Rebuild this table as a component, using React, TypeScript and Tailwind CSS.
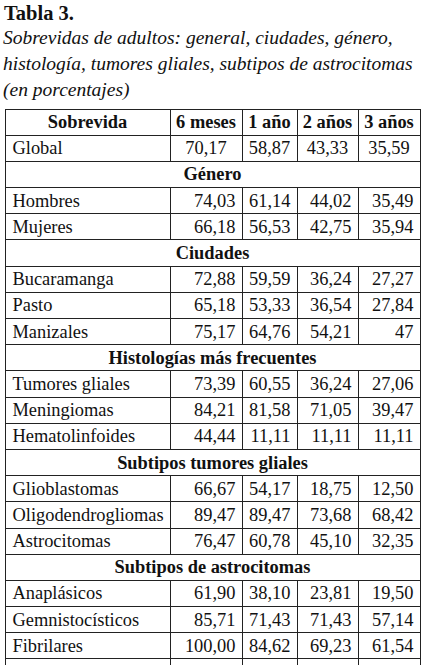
import React from "react";

type Row =
  | { kind: "section"; label: string }
  | { kind: "data"; label: string; values: string[]; center?: boolean };

const rows: Row[] = [
  { kind: "data", label: "Global", values: ["70,17", "58,87", "43,33", "35,59"], center: true },
  { kind: "section", label: "Género" },
  { kind: "data", label: "Hombres", values: ["74,03", "61,14", "44,02", "35,49"] },
  { kind: "data", label: "Mujeres", values: ["66,18", "56,53", "42,75", "35,94"] },
  { kind: "section", label: "Ciudades" },
  { kind: "data", label: "Bucaramanga", values: ["72,88", "59,59", "36,24", "27,27"] },
  { kind: "data", label: "Pasto", values: ["65,18", "53,33", "36,54", "27,84"] },
  { kind: "data", label: "Manizales", values: ["75,17", "64,76", "54,21", "47"] },
  { kind: "section", label: "Histologías más frecuentes" },
  { kind: "data", label: "Tumores gliales", values: ["73,39", "60,55", "36,24", "27,06"] },
  { kind: "data", label: "Meningiomas", values: ["84,21", "81,58", "71,05", "39,47"] },
  { kind: "data", label: "Hematolinfoides", values: ["44,44", "11,11", "11,11", "11,11"] },
  { kind: "section", label: "Subtipos tumores gliales" },
  { kind: "data", label: "Glioblastomas", values: ["66,67", "54,17", "18,75", "12,50"] },
  { kind: "data", label: "Oligodendrogliomas", values: ["89,47", "89,47", "73,68", "68,42"] },
  { kind: "data", label: "Astrocitomas", values: ["76,47", "60,78", "45,10", "32,35"] },
  { kind: "section", label: "Subtipos de astrocitomas" },
  { kind: "data", label: "Anaplásicos", values: ["61,90", "38,10", "23,81", "19,50"] },
  { kind: "data", label: "Gemnistocísticos", values: ["85,71", "71,43", "71,43", "57,14"] },
  { kind: "data", label: "Fibrilares", values: ["100,00", "84,62", "69,23", "61,54"] },
  { kind: "data", label: "", values: ["", "", "", ""] },
];

export default function App() {
  return (
    <div className="w-[428px] h-[665px] overflow-hidden bg-white text-[#111] font-['Liberation_Serif',serif]">
      <div className="pl-[4px] pt-[1px] text-[20.5px] leading-[24px] font-bold">Tabla 3.</div>
      <p className="pl-[3px] text-[19.5px] leading-[26px] italic">
        Sobrevidas de adultos: general, ciudades, género,
        <br />
        histología, tumores gliales, subtipos de astrocitomas
        <br />
        (en porcentajes)
      </p>
      <table className="mt-[5.5px] ml-[4.5px] w-[415px] table-fixed border-collapse text-[18.4px] leading-[20px]">
        <colgroup>
          <col className="w-[165px]" />
          <col className="w-[72px]" />
          <col className="w-[55px]" />
          <col className="w-[61px]" />
          <col className="w-[62px]" />
        </colgroup>
        <thead>
          <tr className="h-[26.2px]">
            <th className="border border-[#222] p-0 text-center font-bold">Sobrevida</th>
            <th className="border border-[#222] p-0 text-center font-bold">6 meses</th>
            <th className="border border-[#222] p-0 text-center font-bold">1 año</th>
            <th className="border border-[#222] p-0 text-center font-bold">2 años</th>
            <th className="border border-[#222] p-0 text-center font-bold">3 años</th>
          </tr>
        </thead>
        <tbody>
          {rows.map((r, i) =>
            r.kind === "section" ? (
              <tr key={i} className="h-[26.2px]">
                <td colSpan={5} className="border border-[#222] p-0 text-center font-bold">
                  {r.label}
                </td>
              </tr>
            ) : (
              <tr key={i} className="h-[26.2px]">
                <td className="border border-[#222] py-0 pl-[7px] pr-0 text-left">{r.label}</td>
                {r.values.map((v, j) => (
                  <td
                    key={j}
                    className={
                      r.center
                        ? "border border-[#222] p-0 text-center"
                        : "border border-[#222] py-0 pl-0 pr-[6px] text-right"
                    }
                  >
                    {v}
                  </td>
                ))}
              </tr>
            )
          )}
        </tbody>
      </table>
    </div>
  );
}
